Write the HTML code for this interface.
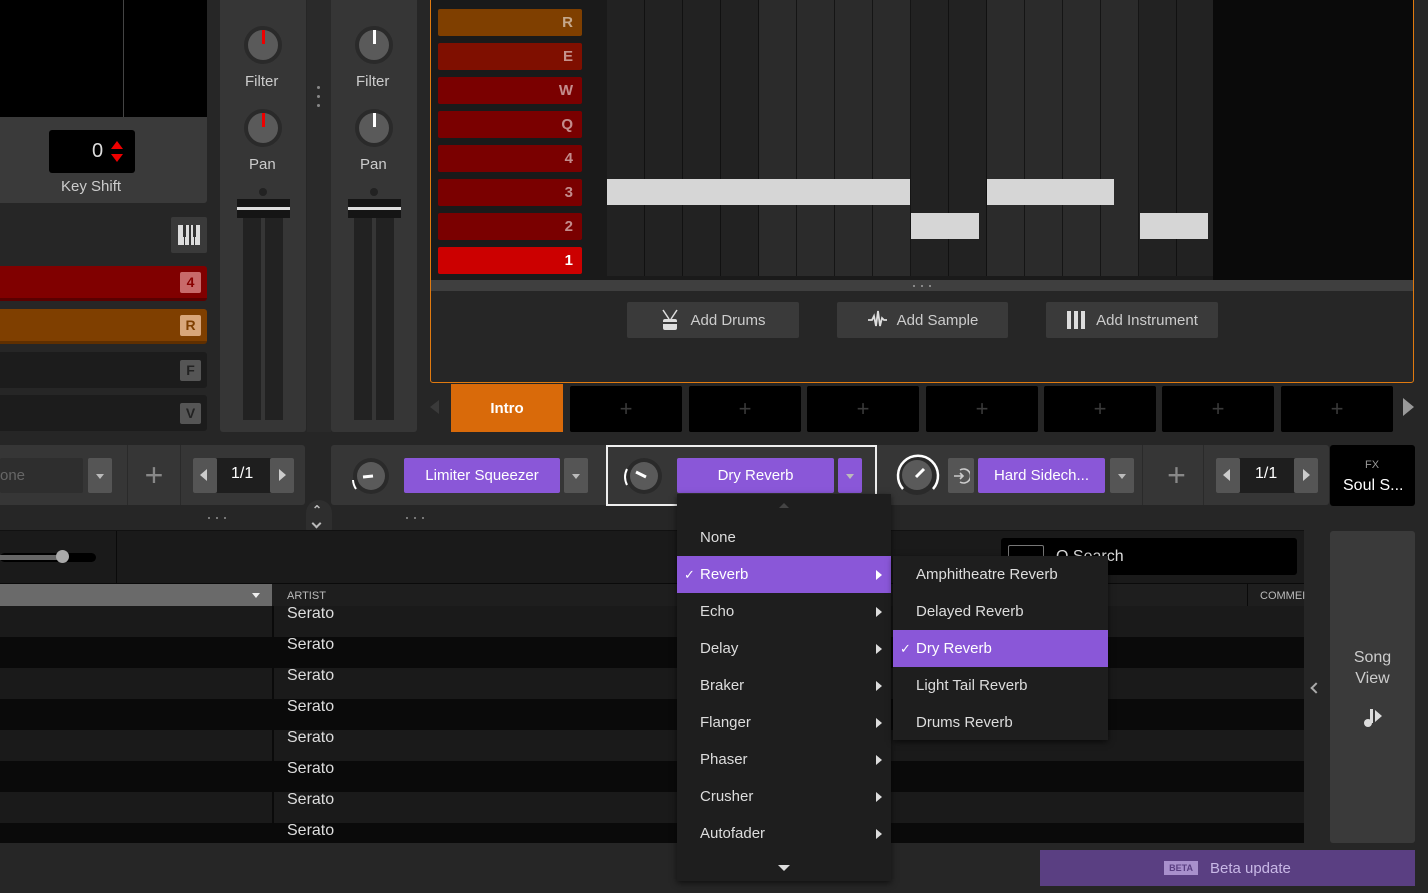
<!DOCTYPE html>
<html><head><style>
*{margin:0;padding:0;box-sizing:border-box}
body{width:1428px;height:893px;background:#262626;position:relative;overflow:hidden;font-family:"Liberation Sans",sans-serif;color:#ddd}
.a{position:absolute}
.c{display:flex;align-items:center;justify-content:center}
.pad{position:absolute;left:438px;width:144px;height:27px;border-radius:2px;color:rgba(255,255,255,.55);font-weight:bold;font-size:15px;text-align:right;padding-right:9px;line-height:27px}
.badge{position:absolute;left:180px;width:21px;height:21px;border-radius:2px;font-weight:bold;font-size:14px;line-height:21px;text-align:center}
.cell{position:absolute;top:386px;width:112px;height:46px;background:#000;color:#3a3a3a;font-size:22px;display:flex;align-items:center;justify-content:center;border-radius:2px}
.btn{position:absolute;top:302px;height:36px;background:#3a3a3a;border-radius:2px;color:#ccc;font-size:15px;display:flex;align-items:center;justify-content:center;gap:10px}
.pur{position:absolute;top:458px;height:35px;background:#8a57d8;color:#fff;font-size:15px;border-radius:2px;display:flex;align-items:center;justify-content:center}
.dd{position:absolute;top:458px;width:24px;height:35px;background:#555;border-radius:2px}
.dd:after{content:"";position:absolute;left:8px;top:16px;border:4px solid transparent;border-top:5px solid #bbb}
.row{position:absolute;left:0;width:1304px;height:31px}
.ser{position:absolute;left:287px;font-size:16px;color:#ddd}
.mi{position:absolute;left:677px;width:214px;height:37px;font-size:15px;color:#ddd;padding-left:23px;line-height:37px}
.mi .ar{position:absolute;right:9px;top:14px;border:5px solid transparent;border-left:6px solid #ddd;border-right:0}
.si{position:absolute;left:893px;width:215px;height:37px;font-size:15px;color:#ddd;padding-left:23px;line-height:37px}
.knob{position:absolute;width:38px;height:38px;border-radius:50%;background:#5a5a5a;border:4px solid #2a2a2a}
</style></head><body>

<!-- top-left -->
<div class="a" style="left:0;top:0;width:207px;height:117px;background:#000"></div>
<div class="a" style="left:123px;top:0;width:1px;height:117px;background:#444"></div>
<div class="a" style="left:0;top:117px;width:207px;height:86px;background:#3a3a3a;border-radius:0 0 3px 0"></div>
<div class="a" style="left:49px;top:130px;width:86px;height:43px;background:#000;border-radius:3px"></div>
<div class="a" style="left:92px;top:140px;font-size:20px;color:#ddd">0</div>
<div class="a" style="left:111px;top:141px;border:6px solid transparent;border-bottom:8px solid #e00;border-top:0"></div>
<div class="a" style="left:111px;top:154px;border:6px solid transparent;border-top:8px solid #e00;border-bottom:0"></div>
<div class="a" style="left:61px;top:178px;font-size:15px;color:#ccc">Key Shift</div>
<div class="a c" style="left:171px;top:217px;width:36px;height:36px;background:#3a3a3a;border-radius:2px">
<svg width="24" height="22"><rect x="1" y="1" width="22" height="20" fill="#ddd"/><rect x="6" y="1" width="3" height="12" fill="#333"/><rect x="12" y="1" width="2" height="20" fill="#333"/><rect x="16" y="1" width="3" height="12" fill="#333"/><rect x="7" y="13" width="1" height="8" fill="#333"/><rect x="17" y="13" width="1" height="8" fill="#333"/></svg></div>
<div class="a" style="left:0;top:266px;width:207px;height:35px;background:#800000;border-bottom:3px solid #5a0000;border-radius:0 3px 3px 0"></div>
<div class="badge" style="top:272px;background:#c86a6a;color:#800">4</div>
<div class="a" style="left:0;top:309px;width:207px;height:35px;background:#7f3f00;border-bottom:3px solid #5f2f00;border-radius:0 3px 3px 0"></div>
<div class="badge" style="top:315px;background:#d8a67a;color:#7f3f00">R</div>
<div class="a" style="left:0;top:352px;width:207px;height:36px;background:#1c1c1c;border-radius:0 3px 3px 0"></div>
<div class="badge" style="top:360px;background:#555;color:#222">F</div>
<div class="a" style="left:0;top:395px;width:207px;height:36px;background:#1c1c1c;border-radius:0 3px 3px 0"></div>
<div class="badge" style="top:403px;background:#555;color:#222">V</div>

<!-- mixer strips -->
<div class="a" style="left:307px;top:0;width:24px;height:432px;background:#2a2a2a"></div>
<div class="a" style="left:317px;top:86px;width:3px;height:3px;background:#888;border-radius:50%;box-shadow:0 9px #888,0 18px #888"></div>
<div class="a" style="left:220px;top:0;width:86px;height:432px;background:#363636;border-radius:0 0 3px 3px"></div>
<div class="a" style="left:331px;top:0;width:86px;height:432px;background:#363636;border-radius:0 0 3px 3px"></div>
<div class="knob" style="left:244px;top:26px"></div><div class="a" style="left:262px;top:30px;width:3px;height:14px;background:#e00"></div>
<div class="knob" style="left:244px;top:109px"></div><div class="a" style="left:262px;top:113px;width:3px;height:14px;background:#e00"></div>
<div class="knob" style="left:355px;top:26px"></div><div class="a" style="left:373px;top:30px;width:3px;height:14px;background:#fff"></div>
<div class="knob" style="left:355px;top:109px"></div><div class="a" style="left:373px;top:113px;width:3px;height:14px;background:#fff"></div>
<div class="a" style="left:245px;top:73px;font-size:15px;color:#ccc">Filter</div>
<div class="a" style="left:356px;top:73px;font-size:15px;color:#ccc">Filter</div>
<div class="a" style="left:249px;top:156px;font-size:15px;color:#ccc">Pan</div>
<div class="a" style="left:360px;top:156px;font-size:15px;color:#ccc">Pan</div>
<div class="a" style="left:259px;top:188px;width:8px;height:8px;border-radius:50%;background:#222"></div>
<div class="a" style="left:370px;top:188px;width:8px;height:8px;border-radius:50%;background:#222"></div>
<div class="a" style="left:243px;top:212px;width:18px;height:208px;background:#222"></div>
<div class="a" style="left:265px;top:212px;width:18px;height:208px;background:#222"></div>
<div class="a" style="left:354px;top:212px;width:18px;height:208px;background:#222"></div>
<div class="a" style="left:376px;top:212px;width:18px;height:208px;background:#222"></div>
<div class="a" style="left:237px;top:199px;width:53px;height:19px;background:#151515"></div>
<div class="a" style="left:237px;top:207px;width:53px;height:3px;background:#ddd"></div>
<div class="a" style="left:348px;top:199px;width:53px;height:19px;background:#151515"></div>
<div class="a" style="left:348px;top:207px;width:53px;height:3px;background:#ddd"></div>

<!-- orange panel -->
<div class="a" style="left:430px;top:-2px;width:984px;height:385px;border:1px solid #e07a10;border-radius:0 0 3px 3px;background:#262626"></div>
<div class="a" style="left:431px;top:0;width:982px;height:282px;background:#1a1a1a"></div>
<div class="pad" style="top:9px;background:#7f3f00">R</div>
<div class="pad" style="top:43px;background:#7f0f00">E</div>
<div class="pad" style="top:77px;background:#7a0000">W</div>
<div class="pad" style="top:111px;background:#7a0000">Q</div>
<div class="pad" style="top:145px;background:#7a0000">4</div>
<div class="pad" style="top:179px;background:#7a0000">3</div>
<div class="pad" style="top:213px;background:#7a0000">2</div>
<div class="pad" style="top:247px;background:#cc0000;color:#fff">1</div>
<div class="a" style="left:607px;top:0;width:606px;height:276px;background:repeating-linear-gradient(90deg,#222 0 37px,#111 37px 38px)"></div>
<div class="a" style="left:759px;top:0;width:152px;height:276px;background:repeating-linear-gradient(90deg,#2b2b2b 0 37px,#151515 37px 38px)"></div>
<div class="a" style="left:987px;top:0;width:152px;height:276px;background:repeating-linear-gradient(90deg,#2b2b2b 0 37px,#151515 37px 38px)"></div>
<div class="a" style="left:1213px;top:0;width:200px;height:280px;background:#0a0a0a"></div>
<div class="a" style="left:607px;top:179px;width:303px;height:26px;background:#d6d6d6"></div>
<div class="a" style="left:911px;top:213px;width:68px;height:26px;background:#d6d6d6"></div>
<div class="a" style="left:987px;top:179px;width:127px;height:26px;background:#d6d6d6"></div>
<div class="a" style="left:1140px;top:213px;width:68px;height:26px;background:#d6d6d6"></div>
<div class="a" style="left:431px;top:280px;width:982px;height:11px;background:#3f3f3f"></div>
<div class="a" style="left:913px;top:285px;width:2px;height:2px;background:#888;box-shadow:8px 0 #888,16px 0 #888"></div>
<div class="btn" style="left:627px;width:172px"><svg width="20" height="22"><path d="M3 1l6 9M17 1l-6 9" stroke="#ddd" stroke-width="1.5"/><rect x="3" y="10" width="14" height="11" rx="2" fill="#ddd"/><rect x="3" y="13" width="14" height="2" fill="#3a3a3a"/></svg>Add Drums</div>
<div class="btn" style="left:837px;width:171px"><svg width="20" height="20"><path d="M1 10h4l2-4 2 10 2-15 2 15 2-8 2 2h3" stroke="#ddd" stroke-width="1.8" fill="none"/></svg>Add Sample</div>
<div class="btn" style="left:1046px;width:172px"><svg width="20" height="20"><rect x="1" y="1" width="4" height="18" fill="#ddd"/><rect x="8" y="1" width="4" height="18" fill="#ddd"/><rect x="15" y="1" width="4" height="18" fill="#ddd"/></svg>Add Instrument</div>

<!-- scenes -->
<div class="a" style="left:430px;top:400px;border:7px solid transparent;border-right:9px solid #3a3a3a;border-left:0"></div>
<div class="a c" style="left:451px;top:384px;width:112px;height:48px;background:#d96a0a;color:#fff;font-size:15px;font-weight:bold">Intro</div>
<div class="cell" style="left:570px">+</div><div class="cell" style="left:689px">+</div><div class="cell" style="left:807px">+</div><div class="cell" style="left:926px">+</div><div class="cell" style="left:1044px">+</div><div class="cell" style="left:1162px">+</div><div class="cell" style="left:1281px">+</div>
<div class="a" style="left:1403px;top:398px;border:9px solid transparent;border-left:11px solid #999;border-right:0"></div>

<!-- FX row -->
<div class="a" style="left:0;top:445px;width:305px;height:60px;background:#363636;border-radius:0 3px 3px 0"></div>
<div class="a" style="left:127px;top:445px;width:1px;height:60px;background:#2a2a2a"></div>
<div class="a" style="left:180px;top:445px;width:1px;height:60px;background:#2a2a2a"></div>
<div class="a" style="left:0;top:458px;width:83px;height:35px;background:#2e2e2e;border-radius:2px;color:#666;font-size:15px;line-height:35px">one</div>
<div class="dd" style="left:88px"></div>
<div class="a c" style="left:128px;top:455px;width:52px;height:40px;color:#888;font-size:32px;font-weight:300">+</div>
<div class="a" style="left:193px;top:458px;width:101px;height:35px;background:#1e1e1e;border-radius:2px"></div>
<div class="a" style="left:193px;top:458px;width:24px;height:35px;background:#555;border-radius:2px"></div>
<div class="a" style="left:270px;top:458px;width:24px;height:35px;background:#555;border-radius:2px"></div>
<div class="a" style="left:200px;top:469px;border:6px solid transparent;border-right:7px solid #ccc;border-left:0"></div>
<div class="a" style="left:279px;top:469px;border:6px solid transparent;border-left:7px solid #ccc;border-right:0"></div>
<div class="a" style="left:231px;top:465px;font-size:16px;color:#fff">1/1</div>

<div class="a" style="left:331px;top:445px;width:998px;height:60px;background:#363636;border-radius:3px"></div>
<div class="a" style="left:1142px;top:445px;width:1px;height:60px;background:#2a2a2a"></div>
<div class="a" style="left:1203px;top:445px;width:1px;height:60px;background:#2a2a2a"></div>
<div class="a" style="left:606px;top:445px;width:271px;height:61px;border:2px solid #eee;background:#363636"></div>
<svg class="a" style="left:346px;top:455px" width="50" height="44"><circle cx="25" cy="21" r="18" fill="#2a2a2a"/><circle cx="25" cy="21" r="14" fill="#5a5a5a"/><path d="M17 22l10-1" stroke="#fff" stroke-width="3"/><path d="M7 25a18 18 0 0 0 3 9" stroke="#fff" stroke-width="2" fill="none"/></svg>
<svg class="a" style="left:619px;top:455px" width="50" height="44"><circle cx="25" cy="21" r="18" fill="#2a2a2a"/><circle cx="25" cy="21" r="14" fill="#5a5a5a"/><path d="M17 17l10 5" stroke="#fff" stroke-width="3"/><path d="M8 14a18 18 0 0 0 0 16" stroke="#fff" stroke-width="2" fill="none"/></svg>
<svg class="a" style="left:892px;top:453px" width="50" height="46"><circle cx="25" cy="22" r="20" fill="#2a2a2a"/><circle cx="25" cy="22" r="15" fill="#5a5a5a"/><path d="M24 24l8-8" stroke="#fff" stroke-width="3"/><path d="M11 36A20 20 0 1 1 41 36" stroke="#fff" stroke-width="2.5" fill="none"/></svg>
<div class="pur" style="left:404px;width:156px">Limiter Squeezer</div><div class="dd" style="left:564px"></div>
<div class="pur" style="left:677px;width:157px">Dry Reverb</div><div class="dd" style="left:838px;background:#8a57d8"></div>
<div class="a c" style="left:948px;top:458px;width:26px;height:35px;background:#555;border-radius:2px"><svg width="18" height="18"><path d="M8 3a7 7 0 1 1 0 12M2 9h9M8 6l3 3-3 3" stroke="#ccc" stroke-width="1.6" fill="none"/></svg></div>
<div class="pur" style="left:978px;width:127px">Hard Sidech...</div><div class="dd" style="left:1110px"></div>
<div class="a c" style="left:1150px;top:455px;width:53px;height:40px;color:#888;font-size:32px;font-weight:300">+</div>
<div class="a" style="left:1216px;top:458px;width:102px;height:35px;background:#1e1e1e;border-radius:2px"></div>
<div class="a" style="left:1216px;top:458px;width:24px;height:35px;background:#555;border-radius:2px"></div>
<div class="a" style="left:1294px;top:458px;width:24px;height:35px;background:#555;border-radius:2px"></div>
<div class="a" style="left:1223px;top:469px;border:6px solid transparent;border-right:7px solid #ccc;border-left:0"></div>
<div class="a" style="left:1303px;top:469px;border:6px solid transparent;border-left:7px solid #ccc;border-right:0"></div>
<div class="a" style="left:1255px;top:465px;font-size:16px;color:#fff">1/1</div>
<div class="a" style="left:1330px;top:445px;width:85px;height:61px;background:#000;border-radius:3px"></div>
<div class="a" style="left:1365px;top:459px;font-size:11px;color:#999">FX</div>
<div class="a" style="left:1343px;top:477px;font-size:16px;color:#fff">Soul S...</div>
<div class="a" style="left:208px;top:517px;width:2px;height:2px;background:#777;box-shadow:8px 0 #777,16px 0 #777"></div>
<div class="a" style="left:406px;top:517px;width:2px;height:2px;background:#777;box-shadow:8px 0 #777,16px 0 #777"></div>
<div class="a" style="left:306px;top:500px;width:26px;height:42px;background:#2e2e2e;border-radius:13px"></div>
<div class="a" style="left:312px;top:503px;color:#bbb;font-size:12px;font-weight:bold">&#8963;</div>
<div class="a" style="left:313px;top:520px;width:7px;height:7px;border-right:2px solid #bbb;border-bottom:2px solid #bbb;transform:rotate(45deg)"></div>

<!-- library -->
<div class="a" style="left:0;top:531px;width:1304px;height:312px;background:#1a1a1a"></div>
<div class="a" style="left:0;top:530px;width:1304px;height:1px;background:#111"></div>
<div class="a" style="left:116px;top:531px;width:1px;height:52px;background:#0a0a0a"></div>
<div class="a" style="left:0;top:553px;width:96px;height:9px;background:#000;border-radius:5px"></div>
<div class="a" style="left:0;top:555px;width:62px;height:5px;background:#666"></div>
<div class="a" style="left:56px;top:550px;width:13px;height:13px;border-radius:50%;background:#aaa"></div>
<div class="a" style="left:1001px;top:538px;width:296px;height:37px;background:#000;border-radius:3px"></div>
<div class="a" style="left:1008px;top:545px;width:36px;height:22px;border:1px solid #777;border-radius:2px"></div>
<div class="a" style="left:1056px;top:548px;font-size:16px;color:#ddd">Q Search</div>
<div class="a" style="left:0;top:583px;width:1304px;height:23px;background:#1e1e1e;border-top:1px solid #0a0a0a"></div>
<div class="a" style="left:0;top:584px;width:272px;height:22px;background:#6a6a6a"></div>
<div class="a" style="left:252px;top:593px;border:4px solid transparent;border-top:5px solid #eee"></div>
<div class="a" style="left:287px;top:590px;font-size:11px;color:#bbb">ARTIST</div>
<div class="a" style="left:1260px;top:590px;font-size:11px;color:#bbb">COMMEI</div>
<div class="a" style="left:1247px;top:583px;width:1px;height:47px;background:#0a0a0a"></div>
<div class="row" style="top:606px;background:#1a1a1a"></div>
<div class="row" style="top:637px;background:#0a0a0a"></div>
<div class="row" style="top:668px;background:#1a1a1a"></div>
<div class="row" style="top:699px;background:#0a0a0a"></div>
<div class="row" style="top:730px;background:#1a1a1a"></div>
<div class="row" style="top:761px;background:#0a0a0a"></div>
<div class="row" style="top:792px;background:#1a1a1a"></div>
<div class="row" style="top:823px;background:#0a0a0a;height:20px"></div>
<div class="a" style="left:272px;top:606px;width:2px;height:237px;background:#0a0a0a"></div>
<div class="ser" style="top:605px">Serato</div><div class="ser" style="top:636px">Serato</div><div class="ser" style="top:667px">Serato</div><div class="ser" style="top:698px">Serato</div><div class="ser" style="top:729px">Serato</div><div class="ser" style="top:760px">Serato</div><div class="ser" style="top:791px">Serato</div><div class="ser" style="top:822px">Serato</div>
<div class="a" style="left:1312px;top:684px;width:8px;height:8px;border-left:2px solid #aaa;border-bottom:2px solid #aaa;transform:rotate(45deg)"></div>
<div class="a" style="left:1330px;top:531px;width:85px;height:312px;background:#3a3a3a;border-radius:3px"></div>
<div class="a" style="left:1330px;top:647px;width:85px;text-align:center;font-size:16px;color:#ccc;line-height:21px">Song<br>View</div>
<svg class="a" style="left:1362px;top:706px" width="22" height="22"><circle cx="6" cy="17" r="4" fill="#ddd"/><rect x="8" y="3" width="3" height="14" fill="#ddd"/><path d="M13 4l7 6-7 6z" fill="#ddd"/></svg>
<div class="a c" style="left:1040px;top:850px;width:375px;height:36px;background:#5a3f82;color:#c8b8e6;font-size:15px;gap:12px"><span style="background:#a890cc;color:#5a3f82;font-size:9px;font-weight:bold;padding:2px 5px">BETA</span>Beta update</div>

<!-- dropdown menu -->
<div class="a" style="left:677px;top:494px;width:214px;height:387px;background:#1e1e1e;box-shadow:0 2px 6px rgba(0,0,0,.6)"></div>
<div class="a" style="left:779px;top:503px;border:5px solid transparent;border-bottom:5px solid #444;border-top:0"></div>
<div class="mi" style="top:519px">None</div>
<div class="mi" style="top:556px;background:#8a57d8;color:#fff"><span class="a" style="left:7px;font-size:13px">✓</span>Reverb<i class="ar" style="border-left-color:#fff"></i></div>
<div class="mi" style="top:593px">Echo<i class="ar"></i></div>
<div class="mi" style="top:630px">Delay<i class="ar"></i></div>
<div class="mi" style="top:667px">Braker<i class="ar"></i></div>
<div class="mi" style="top:704px">Flanger<i class="ar"></i></div>
<div class="mi" style="top:741px">Phaser<i class="ar"></i></div>
<div class="mi" style="top:778px">Crusher<i class="ar"></i></div>
<div class="mi" style="top:815px">Autofader<i class="ar"></i></div>
<div class="a" style="left:778px;top:865px;border:6px solid transparent;border-top:6px solid #ddd;border-bottom:0"></div>
<div class="a" style="left:893px;top:556px;width:215px;height:184px;background:#1e1e1e;box-shadow:0 2px 6px rgba(0,0,0,.6)"></div>
<div class="si" style="top:556px">Amphitheatre Reverb</div>
<div class="si" style="top:593px">Delayed Reverb</div>
<div class="si" style="top:630px;background:#8a57d8;color:#fff"><span class="a" style="left:7px;font-size:13px">✓</span>Dry Reverb</div>
<div class="si" style="top:667px">Light Tail Reverb</div>
<div class="si" style="top:704px">Drums Reverb</div>
</body></html>
